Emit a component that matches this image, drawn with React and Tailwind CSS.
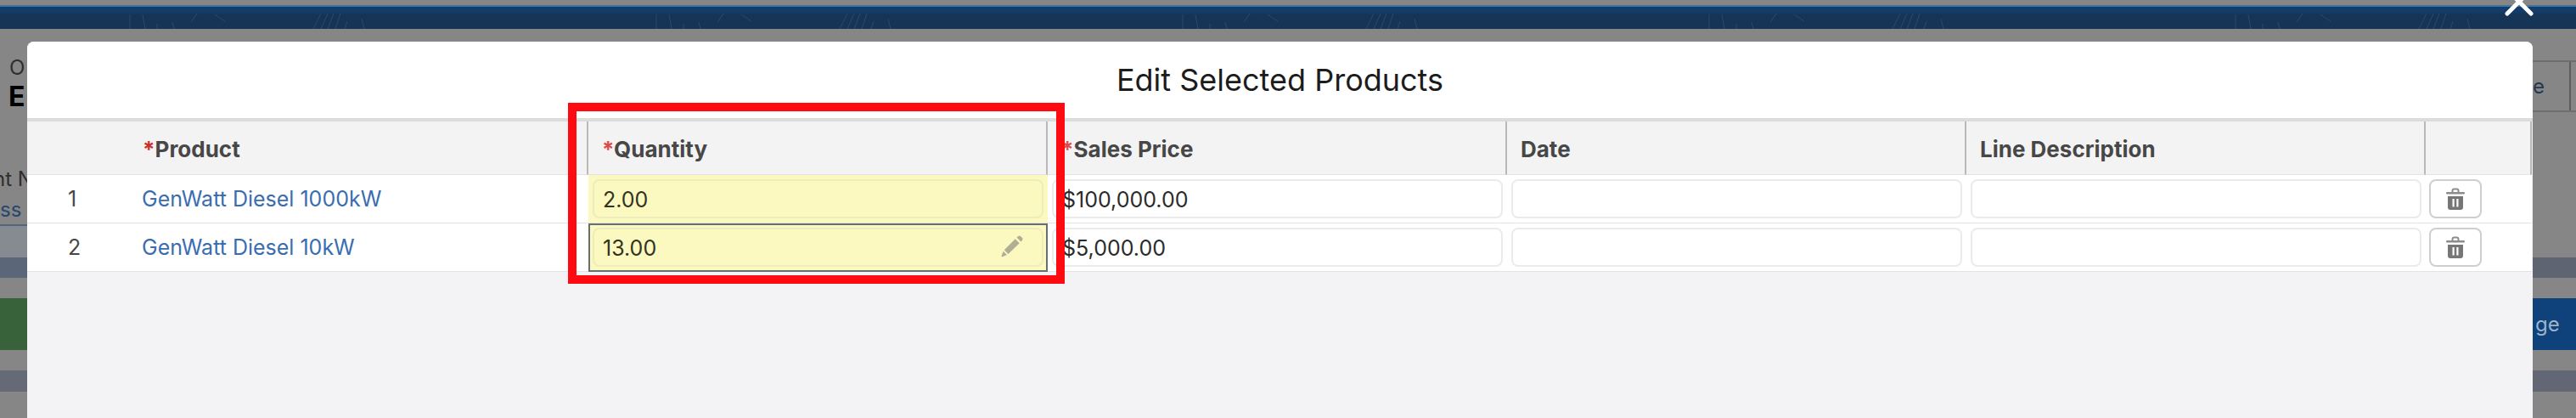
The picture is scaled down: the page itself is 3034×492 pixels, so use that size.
import React, { useState } from 'react';

const initialRows = [
    { id: 1, product: 'GenWatt Diesel 1000kW', quantity: '2.00', price: '$100,000.00', date: '', description: '' },
    { id: 2, product: 'GenWatt Diesel 10kW', quantity: '13.00', price: '$5,000.00', date: '', description: '' },
];

const thClass = 'relative h-[63px] border-r-2 border-b border-r-[#b9b9b9] border-b-[#e3e3e5] px-4 pt-0.5 text-left font-bold';
const inputClass = 'block h-[46px] w-full rounded-lg border-2 border-[#ebebed] bg-transparent px-2.5 pt-0.5 text-[#2b2b2b] outline-none';

function CloseIcon() {
    return (
        <svg viewBox="0 0 34 34" className="h-[34px] w-[34px]" fill="none" stroke="currentColor" strokeWidth="5" strokeLinecap="round">
            <path d="M3 3 31 31M31 3 3 31" />
        </svg>
    );
}

function TrashIcon() {
    return (
        <svg viewBox="0 0 24 26" className="h-[26px] w-6">
            <path d="M8.500 5V3.500a2 2 0 0 1 2-2h3a2 2 0 0 1 2 2V5" fill="none" stroke="#8c8c8c" strokeWidth="2" />
            <rect x="1" y="5" width="22" height="2.500" rx="1.200" fill="#8c8c8c" />
            <path fillRule="evenodd" fill="#767676" d="M3 10h18v13a3 3 0 0 1-3 3H6a3 3 0 0 1-3-3zM8.500 13v9.500h2.200V13zM13.300 13v9.500h2.200V13z" />
        </svg>
    );
}

function PencilIcon() {
    return (
        <svg viewBox="0 0 26 26" className="h-[26px] w-[26px]" fill="#b0ae95">
            <path d="M18.500 2.500 20 1.200a2.500 2.500 0 0 1 3.300 0l1.500 1.500a2.500 2.500 0 0 1 0 3.300l-1.400 1.500z" />
            <path d="M16.700 4.300 21.700 9.300 8.500 22 3.800 17.200z" />
            <path d="M2.700 18.800 7 23.100 1.600 25.200a.8.8 0 0 1-1-1z" />
        </svg>
    );
}

function HeaderPattern() {
    return (
        <svg className="h-full w-full" fill="none" stroke="#35557a" strokeWidth="1">
            <defs>
                <pattern id="strokes" width="620" height="27" patternUnits="userSpaceOnUse">
                    <path d="M153 9v17M168 9l3 17M185 20v6M203 18l2 8M232 8l-7 10M253 9l12 8M378 8l-9 18M386 8l-8 18M393 8l-7 18M401 8l-6 18M409 17l-3 9M426 14l3 12" opacity="0.6" />
                </pattern>
            </defs>
            <rect width="100%" height="100%" fill="url(#strokes)" stroke="none" />
        </svg>
    );
}

function LeftGutter() {
    return (
        <div className="w-8 shrink-0 overflow-hidden whitespace-nowrap text-[24px] leading-8">
            <div className="h-[232px] border-b-2 border-[#536579] pt-[30px]">
                <div className="pl-[11px] text-[#2e2e2e]">O</div>
                <div className="pl-[10px] text-[32px] leading-9 font-bold text-black">E</div>
                <div className="-ml-2 pt-[63px] text-[#2e2e2e]">nt N</div>
                <a href="#account" className="mt-1 block text-[#27476f]">ss</a>
            </div>
            <div className="h-[37px] bg-[#858b90]"></div>
            <div className="h-6 bg-[#5b6778]"></div>
            <div className="h-6"></div>
            <div className="h-[61px] bg-[#37623a]"></div>
            <div className="h-6"></div>
            <div className="h-[25px] bg-[#666a77]"></div>
        </div>
    );
}

function RightGutter() {
    return (
        <div className="w-[51px] shrink-0 overflow-hidden text-[24px]">
            <div className="h-[269px] pt-[37px]">
                <div className="flex h-[61px] border-y-2 border-[#6e6e6e]">
                    <button type="button" className="w-[45px] border-r-2 border-[#5d5d5d] text-left text-[#26364f]">e</button>
                </div>
            </div>
            <div className="h-6 bg-[#5f6473]"></div>
            <div className="h-6"></div>
            <button type="button" className="block h-[61px] w-full bg-[#0f427a] pl-[3px] text-left text-[#9db3ca]">ge</button>
            <div className="h-6"></div>
            <div className="h-[25px] bg-[#636674]"></div>
        </div>
    );
}

function App() {
    const [rows, setRows] = useState(initialRows);

    const updateRow = (id, field, value) => {
        setRows(rows.map((row) => (row.id === id ? { ...row, [field]: value } : row)));
    };

    const removeRow = (id) => {
        setRows(rows.filter((row) => row.id !== id));
    };

    return (
        <div className="relative flex min-h-screen flex-col overflow-hidden bg-[#868686] font-['Inter',sans-serif]">
            <div className="mt-[6px] h-7 border-t-2 border-[#42739c] bg-linear-to-b from-[#123c6c] from-20% to-[#163556] to-35%">
                <HeaderPattern />
            </div>
            <button type="button" aria-label="Close" className="absolute -top-[15px] right-[50px] text-white">
                <CloseIcon />
            </button>

            <div className="flex flex-1">
                <LeftGutter />
                <section className="mt-[15px] flex min-w-0 flex-1 flex-col rounded-t-lg bg-[#f3f3f5]">
                    <header className="flex h-[94px] items-center justify-center rounded-t-lg border-b-4 border-[#dcdcdc] bg-white">
                        <h1 className="text-[36px] text-[#1c1c1c]">Edit Selected Products</h1>
                    </header>

                    <div className="pr-px">
                        <table className="w-full table-fixed border-separate border-spacing-0 text-[25px]">
                            <colgroup>
                                <col className="w-[120px]" />
                                <col span="5" />
                                <col className="w-[125px]" />
                            </colgroup>
                            <thead className="text-[26px] text-[#474747]">
                                <tr className="bg-[#f3f3f4]">
                                    <th className="border-b border-[#e3e3e5]"></th>
                                    <th className={thClass}><span className="text-[#c9302c]">*</span>Product</th>
                                    <th className={thClass}>
                                        <span className="text-[#dc4a4a]">*</span>Quantity
                                        <div className="pointer-events-none absolute -top-[22px] -right-[22px] -left-6 z-10 h-[213px] border-10 border-[#ff0a10]"></div>
                                    </th>
                                    <th className={thClass}><span className="text-[#dc4a4a]">*</span>Sales Price</th>
                                    <th className={thClass}>Date</th>
                                    <th className={thClass}>Line Description</th>
                                    <th className={thClass}></th>
                                </tr>
                            </thead>
                            <tbody>
                                {rows.map((row, index) => (
                                    <tr key={row.id} className="h-[57px] bg-white *:border-b *:border-[#e3e3e5]">
                                        <td className="pt-0.5 pl-[48px] text-[#474747]">{index + 1}</td>
                                        <td className="pt-0.5 pl-[15px]">
                                            <a href="#product" className="text-[#3a6db0]">{row.product}</a>
                                        </td>
                                        <td className={index === 1 ? 'relative bg-[#fbf9bf] px-[5px] outline-2 -outline-offset-2 outline-[#66706e]' : 'bg-[#fbf9bf] px-[5px]'}>
                                            <input
                                                type="text"
                                                aria-label={`Quantity ${row.id}`}
                                                value={row.quantity}
                                                onChange={(e) => updateRow(row.id, 'quantity', e.target.value)}
                                                className="block h-[46px] w-full rounded-lg border-2 border-[#edecbb] px-2.5 pt-0.5 text-[#33331f] outline-none"
                                            />
                                            {index === 1 && (
                                                <span className="absolute top-[14px] right-[29px]">
                                                    <PencilIcon />
                                                </span>
                                            )}
                                        </td>
                                        <td className="px-[5px]">
                                            <input
                                                type="text"
                                                aria-label={`Sales Price ${row.id}`}
                                                value={row.price}
                                                onChange={(e) => updateRow(row.id, 'price', e.target.value)}
                                                className={inputClass}
                                            />
                                        </td>
                                        <td className="px-[5px]">
                                            <input
                                                type="text"
                                                aria-label={`Date ${row.id}`}
                                                value={row.date}
                                                onChange={(e) => updateRow(row.id, 'date', e.target.value)}
                                                className={inputClass}
                                            />
                                        </td>
                                        <td className="px-[5px]">
                                            <input
                                                type="text"
                                                aria-label={`Line Description ${row.id}`}
                                                value={row.description}
                                                onChange={(e) => updateRow(row.id, 'description', e.target.value)}
                                                className={inputClass}
                                            />
                                        </td>
                                        <td className="pl-1">
                                            <button
                                                type="button"
                                                aria-label={`Delete ${row.product}`}
                                                onClick={() => removeRow(row.id)}
                                                className="flex h-[46px] w-[62px] items-center justify-center rounded-lg border-2 border-[#cfcfcf] bg-white"
                                            >
                                                <TrashIcon />
                                            </button>
                                        </td>
                                    </tr>
                                ))}
                            </tbody>
                        </table>
                    </div>
                </section>
                <RightGutter />
            </div>
        </div>
    );
}

export default App;
